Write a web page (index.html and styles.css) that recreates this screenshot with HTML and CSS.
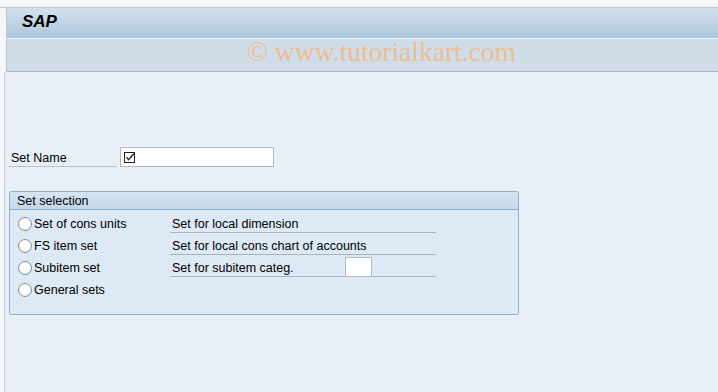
FILE: index.html
```html
<!DOCTYPE html>
<html lang="en">
<head>
  <meta charset="UTF-8" />
  <title>SAP - Set selection</title>
  <link rel="stylesheet" href="styles.css">
</head>
<body>
  <div class="top-strip"></div>

  <header class="titlebar">
    <span class="app-title">SAP</span>
  </header>

  <div class="toolbar">
    <span class="watermark">&copy; www.tutorialkart.com</span>
  </div>

  <main class="content">
    <div class="field-row">
      <label class="field-label" for="setName">Set Name</label>
      <div class="input-box">
        <svg class="check-icon" width="11" height="11" viewBox="0 0 11 11">
          <rect x="0.5" y="0.5" width="10" height="10" fill="none" stroke="#222" />
          <path d="M2.5 5.2 L4.6 7.8 L9.8 1.8" fill="none" stroke="#222" stroke-width="1.3" />
        </svg>
      </div>
    </div>

    <section class="group">
      <div class="group-head">Set selection</div>
      <div class="group-body">
        <div class="sel-row">
          <span class="radio-opt"><span class="radio"></span>Set of cons units</span>
          <span class="desc"><span class="desc-text">Set for local dimension</span></span>
        </div>
        <div class="sel-row">
          <span class="radio-opt"><span class="radio"></span>FS item set</span>
          <span class="desc"><span class="desc-text">Set for local cons chart of accounts</span></span>
        </div>
        <div class="sel-row">
          <span class="radio-opt"><span class="radio"></span>Subitem set</span>
          <span class="desc"><span class="desc-text short">Set for subitem categ.</span><span class="small-input"></span></span>
        </div>
        <div class="sel-row">
          <span class="radio-opt"><span class="radio"></span>General sets</span>
        </div>
      </div>
    </section>
  </main>
</body>
</html>
```

FILE: styles.css
```css
body {
  margin: 0;
  background: #f5f7fa;
  font-family: "Liberation Sans", Arial, sans-serif;
  font-size: 12.5px;
  color: #000;
  height: 392px;
  overflow: hidden;
}
.top-strip {
  height: 7px;
  background: linear-gradient(#fafbfc, #eef1f5);
  border-bottom: 1px solid #bcc6d2;
}
/* Title bar */
.titlebar {
  margin-left: 6px;
  height: 30px;
  border-left: 1px solid #b7c4d2;
  background: linear-gradient(#d3e1ee, #aec6dd);
  border-bottom: 1px solid #f2f6fa;
  display: flex;
  align-items: center;
}
.app-title {
  margin-left: 15px;
  font-family: Arial, "Liberation Sans", sans-serif;
  font-weight: bold;
  font-style: italic;
  font-size: 17px;
  color: #000;
  margin-top: -2px;
}
.toolbar {
  margin-left: 6px;
  height: 32px;
  border-left: 1px solid #b7c4d2;
  background: #cfdde8;
  border-bottom: 1px solid #a7b7c8;
  display: flex;
  justify-content: center;
}
.watermark {
  font-family: "Liberation Serif", "Times New Roman", serif;
  font-size: 27.5px;
  color: #f0b886;
  opacity: 0.85;
  margin-left: 38px;
  line-height: 26px;
}
/* Content area */
.content {
  margin-left: 4px;
  border-left: 1px solid #c5ced8;
  background: #e8eff7;
  height: 320px;
  padding: 75px 0 0 4px;
  box-sizing: border-box;
}
.field-row {
  display: flex;
  align-items: flex-end;
}
.field-label {
  width: 106px;
  padding: 2px 0 0 2px;
  height: 17px;
  line-height: 19px;
  border-bottom: 1px solid #b8c3cf;
}
.input-box {
  margin-left: 3px;
  width: 149px;
  height: 18px;
  background: #fff;
  border: 1px solid #b3b9c1;
  display: flex;
  align-items: center;
  padding-left: 3px;
}
/* Group box */
.group {
  margin-top: 24px;
  width: 508px;
  border: 1px solid #8db0d4;
  border-radius: 2px;
  background: #dde9f4;
}
.group-head {
  height: 17px;
  line-height: 18px;
  padding-left: 7px;
  background: linear-gradient(#d7e5f2, #c2d6ea);
  border-bottom: 1px solid #8db0d4;
}
.group-body {
  padding: 1px 0 15px 8px;
}
.sel-row {
  display: flex;
  height: 22px;
}
.radio-opt {
  width: 152px;
  display: flex;
  align-items: center;
  padding-top: 4px;
  box-sizing: border-box;
}
.radio {
  width: 12px;
  height: 12px;
  border: 1px solid #8a8f96;
  border-radius: 50%;
  background: radial-gradient(circle at 50% 40%, #ffffff 40%, #e4e6ea 100%);
  margin-right: 2px;
}
.desc {
  width: 264px;
  padding-left: 2px;
  border-bottom: 1px solid #a9b3be;
  height: 21px;
  display: flex;
  align-items: flex-end;
}
.desc-text {
  padding-bottom: 1px;
}
.desc-text.short {
  width: 173px;
}
.small-input {
  width: 25px;
  height: 18px;
  background: #fff;
  border: 1px solid #b3b9c1;
  margin-bottom: -1px;
}
```
